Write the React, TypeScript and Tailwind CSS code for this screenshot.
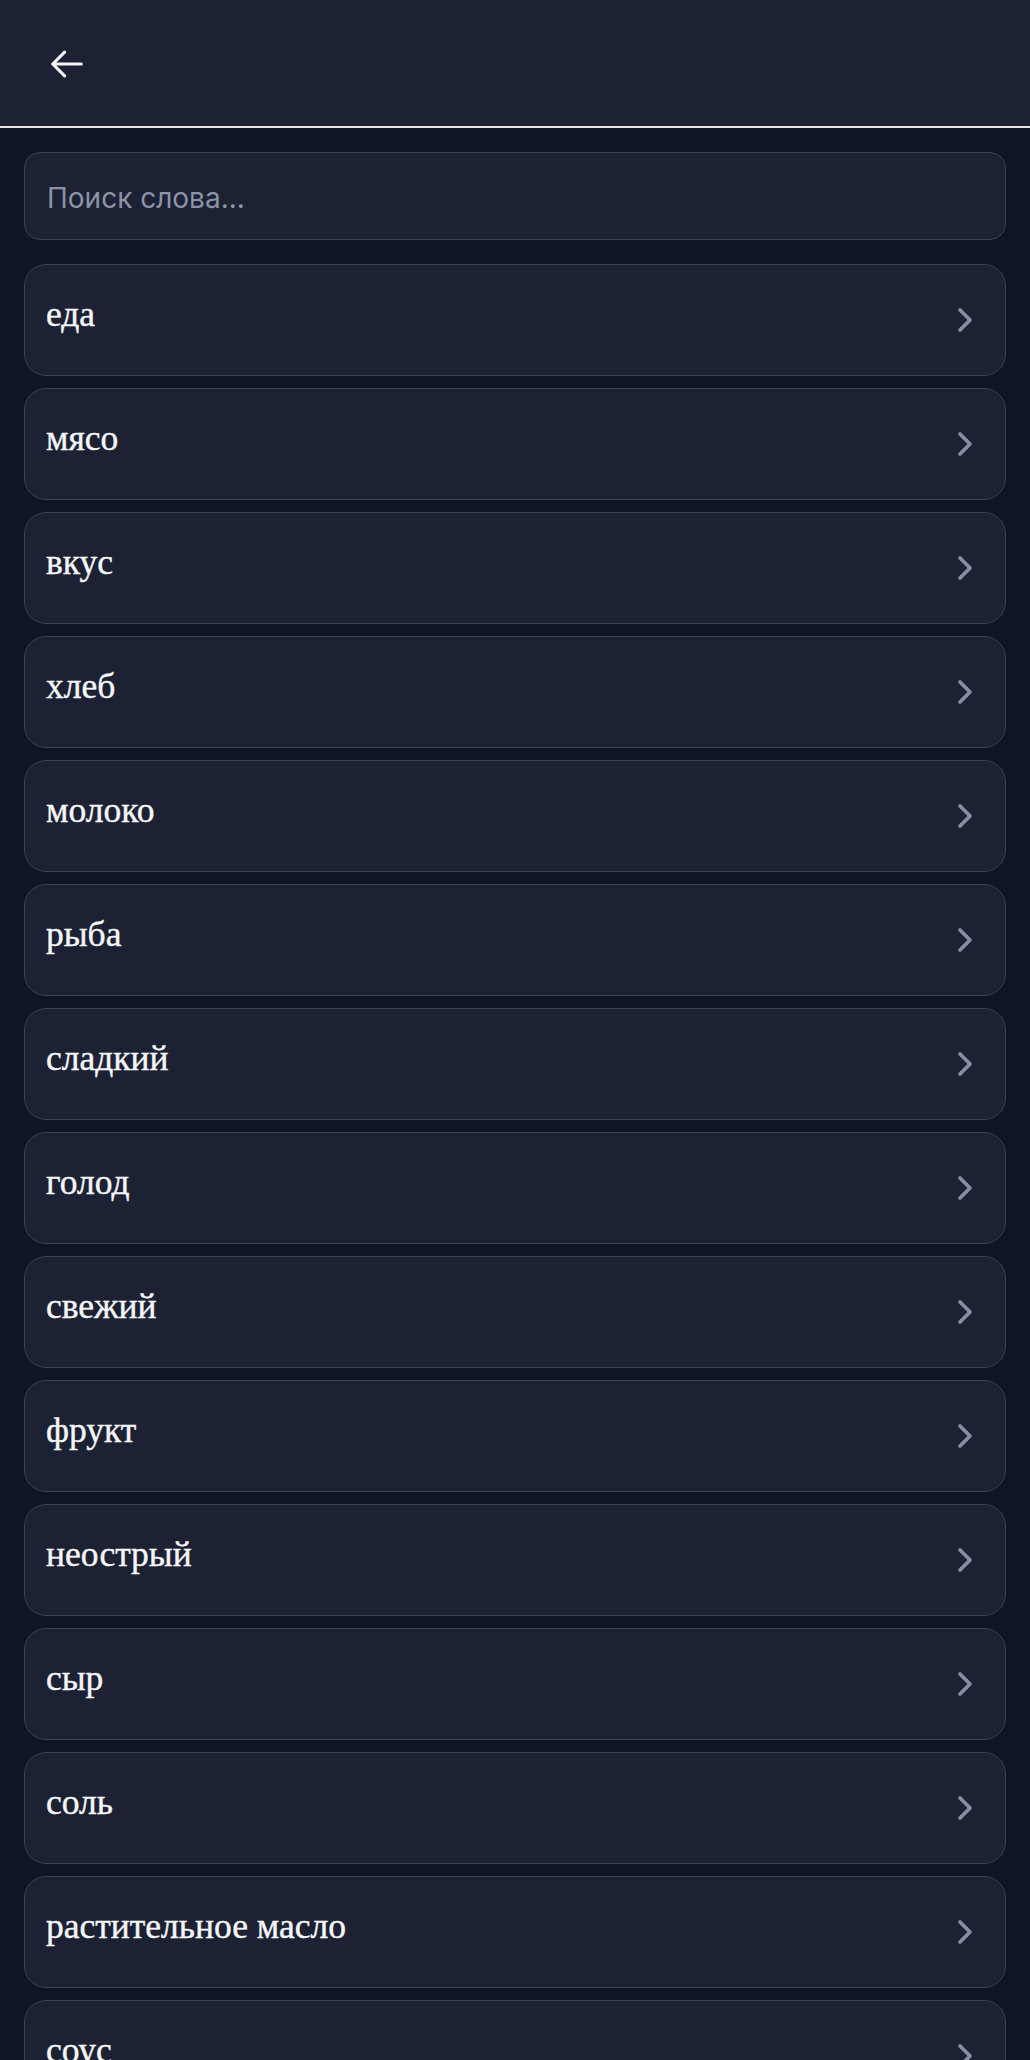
import { ChevronRight } from "lucide-react";

const words = [
  "еда",
  "мясо",
  "вкус",
  "хлеб",
  "молоко",
  "рыба",
  "сладкий",
  "голод",
  "свежий",
  "фрукт",
  "неострый",
  "сыр",
  "соль",
  "растительное масло",
  "соус",
  "овощ",
];

function BackArrow() {
  return (
    <svg
      width="38"
      height="38"
      viewBox="0 0 24 24"
      fill="none"
      stroke="currentColor"
      strokeWidth={2}
      strokeLinecap="round"
      strokeLinejoin="round"
    >
      <path d="M10.5 19.5 3 12m0 0 7.5-7.5M3 12h18" />
    </svg>
  );
}

export default function App() {
  return (
    <div className="min-h-screen bg-[#0f1523] font-['Inter',sans-serif]">
      <header className="flex h-[128px] items-center border-b-2 border-[#e5e5e5] bg-[#1c2233] pl-[48px]">
        <button className="mt-[2px] text-[#f3f4f6]">
          <BackArrow />
        </button>
      </header>

      <main className="px-6 pt-6">
        <div className="flex h-[88px] items-center rounded-2xl border border-[#394152] bg-[#1c2233] px-[22px] pt-[4px]">
          <input
            placeholder="Поиск слова..."
            className="w-full bg-transparent text-[28px] text-white outline-none placeholder:text-[#8b94a7]"
          />
        </div>

        <ul className="mt-[24px] flex flex-col gap-3">
          {words.map((w) => (
            <li
              key={w}
              className="flex h-[112px] items-center justify-between rounded-[22px] border border-[#394152] bg-[#1c2233] pl-[21px] pr-5"
            >
              <span className="mb-[10px] font-['Liberation_Serif',serif] text-[35.5px] text-[#f5f6f8] [-webkit-text-stroke:0.4px_#f5f6f8]">
                {w}
              </span>
              <ChevronRight size={40} strokeWidth={2.2} className="text-[#8790a3]" />
            </li>
          ))}
        </ul>
      </main>
    </div>
  );
}
